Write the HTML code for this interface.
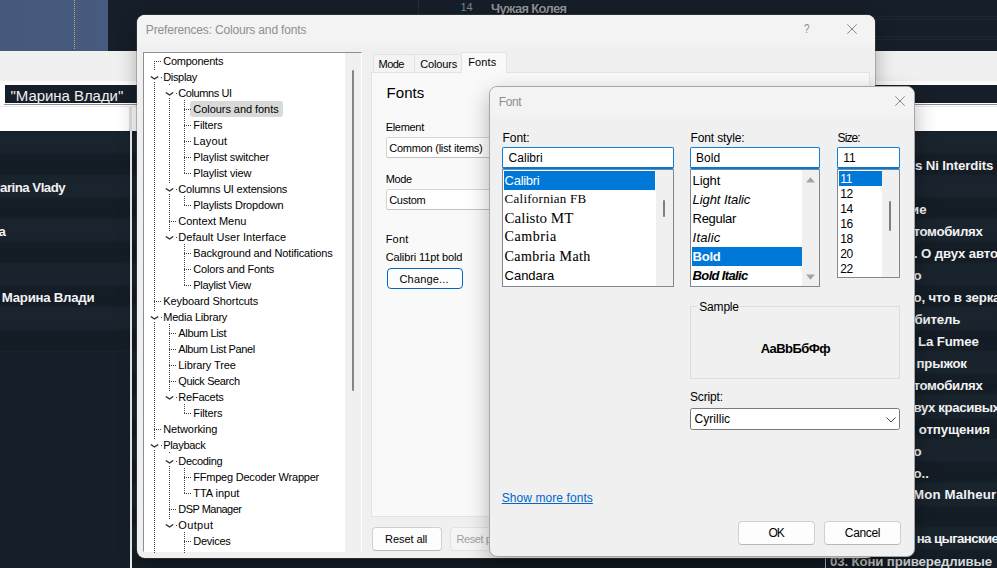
<!DOCTYPE html>
<html><head><meta charset="utf-8"><title>Preferences</title>
<style>
html,body{margin:0;padding:0;}
body{width:997px;height:568px;overflow:hidden;background:#161f29;position:relative;font-family:"Liberation Sans",sans-serif;}
.b{position:absolute;box-sizing:border-box;}
.t{position:absolute;white-space:pre;}
svg{position:absolute;overflow:visible;}
</style></head><body>
<div class="b" id="bg" style="left:0;top:0;width:997px;height:568px;overflow:hidden;">
<div class="b" style="left:0px;top:132px;width:130px;height:220px;background:repeating-linear-gradient(180deg,#19232c 0,#1a242e 10px,#19232c 20px,#151e27 23px,#131c24 33px,#151e27 42px,#19232c 44px);"></div>
<div class="b" style="left:132px;top:132px;width:865px;height:436px;background:repeating-linear-gradient(180deg,#19232c 0,#1a242e 10px,#19232c 20px,#151e27 23px,#131c24 33px,#151e27 42px,#19232c 44px);"></div>
<div class="b" style="left:0px;top:0px;width:108px;height:50.6px;background:linear-gradient(90deg,#45597c,#475b7e);"></div>
<div class="b" style="left:74px;top:0px;width:1px;height:50px;background:repeating-linear-gradient(180deg,#c2a977 0,#c2a977 1px,transparent 1px,transparent 2px);"></div>
<span class="t" style='left:460.50px;top:0.19px;font-size:11px;line-height:14px;color:#7d858d;font-family:"Liberation Sans", sans-serif;'>14</span>
<span class="t" style='left:491.00px;top:-0.40px;font-size:13px;line-height:17px;color:#909396;font-family:"Liberation Sans", sans-serif;letter-spacing:-0.663px;font-weight:bold;text-shadow:1px 1px 0 #080c10;'>Чужая Колея</span>
<div class="b" style="left:418px;top:0px;width:1px;height:50px;background:#222d38;"></div>
<div class="b" style="left:600px;top:16px;width:397px;height:1px;background:#1b2833;"></div>
<div class="b" style="left:600px;top:19px;width:397px;height:1px;background:#1b2833;"></div>
<div class="b" style="left:600px;top:36px;width:397px;height:1px;background:#1b2833;"></div>
<div class="b" style="left:600px;top:39px;width:397px;height:1px;background:#1b2833;"></div>
<div class="b" style="left:0px;top:50.6px;width:997px;height:33.4px;background:#f0f0f0;"></div>
<div class="b" style="left:0px;top:81px;width:997px;height:3px;background:#fbfbfb;"></div>
<div class="b" style="left:0px;top:84px;width:997px;height:22px;background:#fff;"></div>
<div class="b" style="left:4px;top:84px;width:997px;height:20px;background:#161f29;border:1px solid #fff;"></div>
<div class="b" style="left:4px;top:104px;width:997px;height:1px;background:#8e8e8e;"></div>
<span class="t" style='left:10.50px;top:85.80px;font-size:15px;line-height:20px;color:#f0f0f0;font-family:"Liberation Sans", sans-serif;letter-spacing:-0.050px;'>&quot;Марина Влади&quot;</span>
<div class="b" style="left:0px;top:106px;width:997px;height:25px;background:#fff;border-top:1px solid #ececec;"></div>
<div class="b" style="left:129.3px;top:107px;width:2.7px;height:24px;background:#e2e2e2;"></div>
<div class="b" style="left:130px;top:131px;width:2px;height:437px;background:#f2f3f4;"></div>
<div class="b" style="left:825px;top:556px;width:1px;height:12px;background:#c8cacc;"></div>
<span class="t" style='left:-10.50px;top:179.41px;font-size:13.25px;line-height:17px;color:#f2f2f2;font-family:"Liberation Sans", sans-serif;letter-spacing:-0.507px;font-weight:bold;'>Marina Vlady</span>
<span class="t" style='left:-1.50px;top:222.61px;font-size:13.25px;line-height:17px;color:#f2f2f2;font-family:"Liberation Sans", sans-serif;font-weight:bold;'>a</span>
<span class="t" style='left:1.80px;top:288.51px;font-size:13.25px;line-height:17px;color:#f2f2f2;font-family:"Liberation Sans", sans-serif;letter-spacing:-0.264px;font-weight:bold;'>Марина Влади</span>
<span class="t" style='left:915.00px;top:157.11px;font-size:13.25px;line-height:17px;color:#f2f2f2;font-family:"Liberation Sans", sans-serif;letter-spacing:-0.138px;font-weight:bold;'>s Ni Interdits</span>
<span class="t" style='left:903.00px;top:200.71px;font-size:13.25px;line-height:17px;color:#f2f2f2;font-family:"Liberation Sans", sans-serif;font-weight:bold;'>ние</span>
<span class="t" style='left:913.50px;top:222.61px;font-size:13.25px;line-height:17px;color:#f2f2f2;font-family:"Liberation Sans", sans-serif;letter-spacing:-0.305px;font-weight:bold;'>томобилях</span>
<span class="t" style='left:914.00px;top:244.61px;font-size:13.25px;line-height:17px;color:#f2f2f2;font-family:"Liberation Sans", sans-serif;font-weight:bold;letter-spacing:-0.15px;'>. О двух автомобилях</span>
<span class="t" style='left:913.50px;top:266.71px;font-size:13.25px;line-height:17px;color:#f2f2f2;font-family:"Liberation Sans", sans-serif;font-weight:bold;'>о</span>
<span class="t" style='left:913.50px;top:288.71px;font-size:13.25px;line-height:17px;color:#f2f2f2;font-family:"Liberation Sans", sans-serif;font-weight:bold;letter-spacing:-0.15px;'>о, что в зеркалах</span>
<span class="t" style='left:914.50px;top:310.71px;font-size:13.25px;line-height:17px;color:#f2f2f2;font-family:"Liberation Sans", sans-serif;font-weight:bold;letter-spacing:-0.15px;'>битель</span>
<span class="t" style='left:918.00px;top:332.71px;font-size:13.25px;line-height:17px;color:#f2f2f2;font-family:"Liberation Sans", sans-serif;font-weight:bold;letter-spacing:-0.15px;'>La Fumee</span>
<span class="t" style='left:916.50px;top:354.71px;font-size:13.25px;line-height:17px;color:#f2f2f2;font-family:"Liberation Sans", sans-serif;font-weight:bold;letter-spacing:-0.15px;'>прыжок</span>
<span class="t" style='left:913.50px;top:376.71px;font-size:13.25px;line-height:17px;color:#f2f2f2;font-family:"Liberation Sans", sans-serif;letter-spacing:-0.305px;font-weight:bold;'>томобилях</span>
<span class="t" style='left:913.50px;top:398.71px;font-size:13.25px;line-height:17px;color:#f2f2f2;font-family:"Liberation Sans", sans-serif;font-weight:bold;letter-spacing:-0.4px;'>вух красивых</span>
<span class="t" style='left:918.80px;top:420.71px;font-size:13.25px;line-height:17px;color:#f2f2f2;font-family:"Liberation Sans", sans-serif;letter-spacing:-0.111px;font-weight:bold;'>отпущения</span>
<span class="t" style='left:913.50px;top:442.71px;font-size:13.25px;line-height:17px;color:#f2f2f2;font-family:"Liberation Sans", sans-serif;font-weight:bold;'>о</span>
<span class="t" style='left:913.50px;top:464.71px;font-size:13.25px;line-height:17px;color:#f2f2f2;font-family:"Liberation Sans", sans-serif;font-weight:bold;'>о..</span>
<span class="t" style='left:913.00px;top:486.31px;font-size:13.25px;line-height:17px;color:#f2f2f2;font-family:"Liberation Sans", sans-serif;letter-spacing:0.146px;font-weight:bold;'>Mon Malheur</span>
<span class="t" style='left:916.70px;top:530.41px;font-size:13.25px;line-height:17px;color:#f2f2f2;font-family:"Liberation Sans", sans-serif;letter-spacing:-0.614px;font-weight:bold;'>на цыганские</span>
<span class="t" style='left:830.00px;top:552.91px;font-size:13.25px;line-height:17px;color:#d6d8da;font-family:"Liberation Sans", sans-serif;letter-spacing:-0.138px;font-weight:bold;'>03. Кони привередливые</span>
</div>
<div class="b" id="prefs" style="left:137px;top:15px;width:738px;height:543px;background:#f0f0f0;border-radius:8px;box-shadow:0 0 0 1px rgba(90,90,90,.35),0 6px 20px rgba(0,0,0,.30);overflow:hidden;">
<div class="b" style="left:0px;top:0px;width:738px;height:30px;background:#f3f3f3;"></div>
</div>
<span class="t" style='left:145.80px;top:21.74px;font-size:12px;line-height:16px;color:#8f8f8f;font-family:"Liberation Sans", sans-serif;letter-spacing:-0.166px;'>Preferences: Colours and fonts</span>
<span class="t" style='left:804.20px;top:21.04px;font-size:12px;line-height:16px;color:#8a8a8a;font-family:"Liberation Sans", sans-serif;transform:scaleX(.82);transform-origin:0 0;'>?</span>
<svg style="left:847px;top:24px" width="10" height="10" viewBox="0 0 10 10"><path d="M0.3 0.3L9.7 9.7M9.7 0.3L0.3 9.7" stroke="#8a8a8a" stroke-width="1" fill="none"/></svg>
<div class="b" style="left:143px;top:52px;width:219px;height:500.4px;background:#fff;border:1px solid #8e8e8e;border-right-color:#fff;border-bottom-color:#fff;"></div>
<div class="b" style="left:345px;top:53px;width:16px;height:499px;background:#f0f0f0;"></div>
<div class="b" style="left:351.7px;top:70px;width:2px;height:321px;background:#868686;border-radius:1px;"></div>
<div class="b" style="left:190px;top:101px;width:93px;height:16px;background:#d9d9d9;border-radius:3px;"></div>
<span class="t" style='left:163.20px;top:53.69px;font-size:11px;line-height:14px;color:#000;font-family:"Liberation Sans", sans-serif;letter-spacing:-0.235px;'>Components</span>
<div class="b" style="left:154px;top:61px;width:7.199999999999989px;height:1px;background:repeating-linear-gradient(90deg,#444 0,#444 1px,transparent 1px,transparent 2px);"></div>
<span class="t" style='left:163.20px;top:69.69px;font-size:11px;line-height:14px;color:#000;font-family:"Liberation Sans", sans-serif;letter-spacing:-0.319px;'>Display</span>
<svg style="left:149.5px;top:74.5px" width="9" height="6" viewBox="0 0 9 6"><path d="M0.8 1.5L4.5 4.0L8.2 1.5" stroke="#2b2b2b" stroke-width="1.45" fill="none"/></svg>
<div class="b" style="left:161px;top:77px;width:1px;height:1px;background:#444;"></div>
<span class="t" style='left:178.30px;top:85.69px;font-size:11px;line-height:14px;color:#000;font-family:"Liberation Sans", sans-serif;letter-spacing:-0.412px;'>Columns UI</span>
<svg style="left:164.5px;top:90.5px" width="9" height="6" viewBox="0 0 9 6"><path d="M0.8 1.5L4.5 4.0L8.2 1.5" stroke="#2b2b2b" stroke-width="1.45" fill="none"/></svg>
<div class="b" style="left:176px;top:93px;width:1px;height:1px;background:#444;"></div>
<span class="t" style='left:193.30px;top:101.69px;font-size:11px;line-height:14px;color:#000;font-family:"Liberation Sans", sans-serif;letter-spacing:-0.054px;'>Colours and fonts</span>
<div class="b" style="left:184px;top:109px;width:7.300000000000011px;height:1px;background:repeating-linear-gradient(90deg,#444 0,#444 1px,transparent 1px,transparent 2px);"></div>
<span class="t" style='left:193.30px;top:117.69px;font-size:11px;line-height:14px;color:#000;font-family:"Liberation Sans", sans-serif;letter-spacing:-0.132px;'>Filters</span>
<div class="b" style="left:184px;top:125px;width:7.300000000000011px;height:1px;background:repeating-linear-gradient(90deg,#444 0,#444 1px,transparent 1px,transparent 2px);"></div>
<span class="t" style='left:193.30px;top:133.69px;font-size:11px;line-height:14px;color:#000;font-family:"Liberation Sans", sans-serif;letter-spacing:0.125px;'>Layout</span>
<div class="b" style="left:184px;top:141px;width:7.300000000000011px;height:1px;background:repeating-linear-gradient(90deg,#444 0,#444 1px,transparent 1px,transparent 2px);"></div>
<span class="t" style='left:193.30px;top:149.69px;font-size:11px;line-height:14px;color:#000;font-family:"Liberation Sans", sans-serif;letter-spacing:-0.149px;'>Playlist switcher</span>
<div class="b" style="left:184px;top:157px;width:7.300000000000011px;height:1px;background:repeating-linear-gradient(90deg,#444 0,#444 1px,transparent 1px,transparent 2px);"></div>
<span class="t" style='left:193.30px;top:165.69px;font-size:11px;line-height:14px;color:#000;font-family:"Liberation Sans", sans-serif;letter-spacing:-0.146px;'>Playlist view</span>
<div class="b" style="left:184px;top:173px;width:7.300000000000011px;height:1px;background:repeating-linear-gradient(90deg,#444 0,#444 1px,transparent 1px,transparent 2px);"></div>
<span class="t" style='left:178.30px;top:181.69px;font-size:11px;line-height:14px;color:#000;font-family:"Liberation Sans", sans-serif;letter-spacing:-0.203px;'>Columns UI extensions</span>
<svg style="left:164.5px;top:186.5px" width="9" height="6" viewBox="0 0 9 6"><path d="M0.8 1.5L4.5 4.0L8.2 1.5" stroke="#2b2b2b" stroke-width="1.45" fill="none"/></svg>
<div class="b" style="left:176px;top:189px;width:1px;height:1px;background:#444;"></div>
<span class="t" style='left:193.30px;top:197.69px;font-size:11px;line-height:14px;color:#000;font-family:"Liberation Sans", sans-serif;letter-spacing:-0.182px;'>Playlists Dropdown</span>
<div class="b" style="left:184px;top:205px;width:7.300000000000011px;height:1px;background:repeating-linear-gradient(90deg,#444 0,#444 1px,transparent 1px,transparent 2px);"></div>
<span class="t" style='left:178.30px;top:213.69px;font-size:11px;line-height:14px;color:#000;font-family:"Liberation Sans", sans-serif;letter-spacing:-0.039px;'>Context Menu</span>
<div class="b" style="left:169px;top:221px;width:7.300000000000011px;height:1px;background:repeating-linear-gradient(90deg,#444 0,#444 1px,transparent 1px,transparent 2px);"></div>
<span class="t" style='left:178.30px;top:229.69px;font-size:11px;line-height:14px;color:#000;font-family:"Liberation Sans", sans-serif;letter-spacing:0.041px;'>Default User Interface</span>
<svg style="left:164.5px;top:234.5px" width="9" height="6" viewBox="0 0 9 6"><path d="M0.8 1.5L4.5 4.0L8.2 1.5" stroke="#2b2b2b" stroke-width="1.45" fill="none"/></svg>
<div class="b" style="left:176px;top:237px;width:1px;height:1px;background:#444;"></div>
<span class="t" style='left:193.30px;top:245.69px;font-size:11px;line-height:14px;color:#000;font-family:"Liberation Sans", sans-serif;letter-spacing:-0.135px;'>Background and Notifications</span>
<div class="b" style="left:184px;top:253px;width:7.300000000000011px;height:1px;background:repeating-linear-gradient(90deg,#444 0,#444 1px,transparent 1px,transparent 2px);"></div>
<span class="t" style='left:193.30px;top:261.69px;font-size:11px;line-height:14px;color:#000;font-family:"Liberation Sans", sans-serif;letter-spacing:-0.181px;'>Colors and Fonts</span>
<div class="b" style="left:184px;top:269px;width:7.300000000000011px;height:1px;background:repeating-linear-gradient(90deg,#444 0,#444 1px,transparent 1px,transparent 2px);"></div>
<span class="t" style='left:193.30px;top:277.69px;font-size:11px;line-height:14px;color:#000;font-family:"Liberation Sans", sans-serif;letter-spacing:-0.299px;'>Playlist View</span>
<div class="b" style="left:184px;top:285px;width:7.300000000000011px;height:1px;background:repeating-linear-gradient(90deg,#444 0,#444 1px,transparent 1px,transparent 2px);"></div>
<span class="t" style='left:163.20px;top:293.69px;font-size:11px;line-height:14px;color:#000;font-family:"Liberation Sans", sans-serif;letter-spacing:-0.086px;'>Keyboard Shortcuts</span>
<div class="b" style="left:154px;top:301px;width:7.199999999999989px;height:1px;background:repeating-linear-gradient(90deg,#444 0,#444 1px,transparent 1px,transparent 2px);"></div>
<span class="t" style='left:163.20px;top:309.69px;font-size:11px;line-height:14px;color:#000;font-family:"Liberation Sans", sans-serif;letter-spacing:-0.207px;'>Media Library</span>
<svg style="left:149.5px;top:314.5px" width="9" height="6" viewBox="0 0 9 6"><path d="M0.8 1.5L4.5 4.0L8.2 1.5" stroke="#2b2b2b" stroke-width="1.45" fill="none"/></svg>
<div class="b" style="left:161px;top:317px;width:1px;height:1px;background:#444;"></div>
<span class="t" style='left:178.30px;top:325.69px;font-size:11px;line-height:14px;color:#000;font-family:"Liberation Sans", sans-serif;letter-spacing:-0.345px;'>Album List</span>
<div class="b" style="left:169px;top:333px;width:7.300000000000011px;height:1px;background:repeating-linear-gradient(90deg,#444 0,#444 1px,transparent 1px,transparent 2px);"></div>
<span class="t" style='left:178.30px;top:341.69px;font-size:11px;line-height:14px;color:#000;font-family:"Liberation Sans", sans-serif;letter-spacing:-0.373px;'>Album List Panel</span>
<div class="b" style="left:169px;top:349px;width:7.300000000000011px;height:1px;background:repeating-linear-gradient(90deg,#444 0,#444 1px,transparent 1px,transparent 2px);"></div>
<span class="t" style='left:178.30px;top:357.69px;font-size:11px;line-height:14px;color:#000;font-family:"Liberation Sans", sans-serif;letter-spacing:-0.104px;'>Library Tree</span>
<div class="b" style="left:169px;top:365px;width:7.300000000000011px;height:1px;background:repeating-linear-gradient(90deg,#444 0,#444 1px,transparent 1px,transparent 2px);"></div>
<span class="t" style='left:178.30px;top:373.69px;font-size:11px;line-height:14px;color:#000;font-family:"Liberation Sans", sans-serif;letter-spacing:-0.389px;'>Quick Search</span>
<div class="b" style="left:169px;top:381px;width:7.300000000000011px;height:1px;background:repeating-linear-gradient(90deg,#444 0,#444 1px,transparent 1px,transparent 2px);"></div>
<span class="t" style='left:178.30px;top:389.69px;font-size:11px;line-height:14px;color:#000;font-family:"Liberation Sans", sans-serif;letter-spacing:-0.217px;'>ReFacets</span>
<svg style="left:164.5px;top:394.5px" width="9" height="6" viewBox="0 0 9 6"><path d="M0.8 1.5L4.5 4.0L8.2 1.5" stroke="#2b2b2b" stroke-width="1.45" fill="none"/></svg>
<div class="b" style="left:176px;top:397px;width:1px;height:1px;background:#444;"></div>
<span class="t" style='left:193.30px;top:405.69px;font-size:11px;line-height:14px;color:#000;font-family:"Liberation Sans", sans-serif;letter-spacing:-0.132px;'>Filters</span>
<div class="b" style="left:184px;top:413px;width:7.300000000000011px;height:1px;background:repeating-linear-gradient(90deg,#444 0,#444 1px,transparent 1px,transparent 2px);"></div>
<span class="t" style='left:163.20px;top:421.69px;font-size:11px;line-height:14px;color:#000;font-family:"Liberation Sans", sans-serif;letter-spacing:-0.097px;'>Networking</span>
<div class="b" style="left:154px;top:429px;width:7.199999999999989px;height:1px;background:repeating-linear-gradient(90deg,#444 0,#444 1px,transparent 1px,transparent 2px);"></div>
<span class="t" style='left:163.20px;top:437.69px;font-size:11px;line-height:14px;color:#000;font-family:"Liberation Sans", sans-serif;letter-spacing:-0.298px;'>Playback</span>
<svg style="left:149.5px;top:442.5px" width="9" height="6" viewBox="0 0 9 6"><path d="M0.8 1.5L4.5 4.0L8.2 1.5" stroke="#2b2b2b" stroke-width="1.45" fill="none"/></svg>
<div class="b" style="left:161px;top:445px;width:1px;height:1px;background:#444;"></div>
<span class="t" style='left:178.30px;top:453.69px;font-size:11px;line-height:14px;color:#000;font-family:"Liberation Sans", sans-serif;letter-spacing:-0.304px;'>Decoding</span>
<svg style="left:164.5px;top:458.5px" width="9" height="6" viewBox="0 0 9 6"><path d="M0.8 1.5L4.5 4.0L8.2 1.5" stroke="#2b2b2b" stroke-width="1.45" fill="none"/></svg>
<div class="b" style="left:176px;top:461px;width:1px;height:1px;background:#444;"></div>
<span class="t" style='left:193.30px;top:469.69px;font-size:11px;line-height:14px;color:#000;font-family:"Liberation Sans", sans-serif;letter-spacing:-0.223px;'>FFmpeg Decoder Wrapper</span>
<div class="b" style="left:184px;top:477px;width:7.300000000000011px;height:1px;background:repeating-linear-gradient(90deg,#444 0,#444 1px,transparent 1px,transparent 2px);"></div>
<span class="t" style='left:193.30px;top:485.69px;font-size:11px;line-height:14px;color:#000;font-family:"Liberation Sans", sans-serif;letter-spacing:-0.027px;'>TTA input</span>
<div class="b" style="left:184px;top:493px;width:7.300000000000011px;height:1px;background:repeating-linear-gradient(90deg,#444 0,#444 1px,transparent 1px,transparent 2px);"></div>
<span class="t" style='left:178.30px;top:501.69px;font-size:11px;line-height:14px;color:#000;font-family:"Liberation Sans", sans-serif;letter-spacing:-0.524px;'>DSP Manager</span>
<div class="b" style="left:169px;top:509px;width:7.300000000000011px;height:1px;background:repeating-linear-gradient(90deg,#444 0,#444 1px,transparent 1px,transparent 2px);"></div>
<span class="t" style='left:178.30px;top:517.69px;font-size:11px;line-height:14px;color:#000;font-family:"Liberation Sans", sans-serif;letter-spacing:0.366px;'>Output</span>
<svg style="left:164.5px;top:522.5px" width="9" height="6" viewBox="0 0 9 6"><path d="M0.8 1.5L4.5 4.0L8.2 1.5" stroke="#2b2b2b" stroke-width="1.45" fill="none"/></svg>
<div class="b" style="left:176px;top:525px;width:1px;height:1px;background:#444;"></div>
<span class="t" style='left:193.30px;top:533.69px;font-size:11px;line-height:14px;color:#000;font-family:"Liberation Sans", sans-serif;letter-spacing:-0.262px;'>Devices</span>
<div class="b" style="left:184px;top:541px;width:7.300000000000011px;height:1px;background:repeating-linear-gradient(90deg,#444 0,#444 1px,transparent 1px,transparent 2px);"></div>
<div class="b" style="left:154px;top:61px;width:1px;height:10px;background:repeating-linear-gradient(180deg,#444 0,#444 1px,transparent 1px,transparent 2px);"></div>
<div class="b" style="left:154px;top:82px;width:1px;height:229px;background:repeating-linear-gradient(180deg,#444 0,#444 1px,transparent 1px,transparent 2px);"></div>
<div class="b" style="left:154px;top:322px;width:1px;height:117px;background:repeating-linear-gradient(180deg,#444 0,#444 1px,transparent 1px,transparent 2px);"></div>
<div class="b" style="left:154px;top:450px;width:1px;height:103px;background:repeating-linear-gradient(180deg,#444 0,#444 1px,transparent 1px,transparent 2px);"></div>
<div class="b" style="left:169px;top:84px;width:1px;height:2px;background:repeating-linear-gradient(180deg,#444 0,#444 1px,transparent 1px,transparent 2px);"></div>
<div class="b" style="left:169px;top:98px;width:1px;height:85px;background:repeating-linear-gradient(180deg,#444 0,#444 1px,transparent 1px,transparent 2px);"></div>
<div class="b" style="left:169px;top:194px;width:1px;height:37px;background:repeating-linear-gradient(180deg,#444 0,#444 1px,transparent 1px,transparent 2px);"></div>
<div class="b" style="left:184px;top:100px;width:1px;height:74px;background:repeating-linear-gradient(180deg,#444 0,#444 1px,transparent 1px,transparent 2px);"></div>
<div class="b" style="left:184px;top:196px;width:1px;height:10px;background:repeating-linear-gradient(180deg,#444 0,#444 1px,transparent 1px,transparent 2px);"></div>
<div class="b" style="left:184px;top:244px;width:1px;height:42px;background:repeating-linear-gradient(180deg,#444 0,#444 1px,transparent 1px,transparent 2px);"></div>
<div class="b" style="left:169px;top:324px;width:1px;height:67px;background:repeating-linear-gradient(180deg,#444 0,#444 1px,transparent 1px,transparent 2px);"></div>
<div class="b" style="left:184px;top:404px;width:1px;height:10px;background:repeating-linear-gradient(180deg,#444 0,#444 1px,transparent 1px,transparent 2px);"></div>
<div class="b" style="left:169px;top:452px;width:1px;height:2px;background:repeating-linear-gradient(180deg,#444 0,#444 1px,transparent 1px,transparent 2px);"></div>
<div class="b" style="left:169px;top:466px;width:1px;height:53px;background:repeating-linear-gradient(180deg,#444 0,#444 1px,transparent 1px,transparent 2px);"></div>
<div class="b" style="left:184px;top:468px;width:1px;height:26px;background:repeating-linear-gradient(180deg,#444 0,#444 1px,transparent 1px,transparent 2px);"></div>
<div class="b" style="left:184px;top:532px;width:1px;height:21px;background:repeating-linear-gradient(180deg,#444 0,#444 1px,transparent 1px,transparent 2px);"></div>
<div class="b" style="left:373px;top:53.5px;width:42px;height:19px;background:#f3f3f3;border:1px solid #e3e3e3;border-bottom:none;"></div>
<div class="b" style="left:414px;top:53.5px;width:48px;height:19px;background:#f3f3f3;border:1px solid #e3e3e3;border-bottom:none;"></div>
<div class="b" style="left:371px;top:71.5px;width:498.7px;height:445px;background:#f9f9f9;border:1px solid #e3e3e3;"></div>
<div class="b" style="left:460.5px;top:51.5px;width:46px;height:21px;background:#f9f9f9;border:1px solid #e3e3e3;border-bottom:none;"></div>
<span class="t" style='left:378.50px;top:56.79px;font-size:11px;line-height:14px;color:#000;font-family:"Liberation Sans", sans-serif;letter-spacing:-0.522px;'>Mode</span>
<span class="t" style='left:420.20px;top:56.79px;font-size:11px;line-height:14px;color:#000;font-family:"Liberation Sans", sans-serif;letter-spacing:-0.142px;'>Colours</span>
<span class="t" style='left:468.20px;top:54.59px;font-size:11px;line-height:14px;color:#000;font-family:"Liberation Sans", sans-serif;letter-spacing:0.135px;'>Fonts</span>
<span class="t" style='left:386.60px;top:83.00px;font-size:15px;line-height:20px;color:#000;font-family:"Liberation Sans", sans-serif;letter-spacing:0.059px;'>Fonts</span>
<span class="t" style='left:385.70px;top:119.89px;font-size:11px;line-height:14px;color:#000;font-family:"Liberation Sans", sans-serif;letter-spacing:-0.301px;'>Element</span>
<div class="b" style="left:385.8px;top:137px;width:111px;height:20.6px;background:#fff;border:1px solid #d4d4d4;border-bottom-color:#c2c2c2;border-radius:2.5px;"></div>
<span class="t" style='left:389.20px;top:141.19px;font-size:11px;line-height:14px;color:#000;font-family:"Liberation Sans", sans-serif;letter-spacing:-0.235px;'>Common (list items)</span>
<span class="t" style='left:385.70px;top:171.79px;font-size:11px;line-height:14px;color:#000;font-family:"Liberation Sans", sans-serif;letter-spacing:-0.322px;'>Mode</span>
<div class="b" style="left:385.8px;top:189px;width:111px;height:20.6px;background:#fff;border:1px solid #d4d4d4;border-bottom-color:#c2c2c2;border-radius:2.5px;"></div>
<span class="t" style='left:389.20px;top:193.19px;font-size:11px;line-height:14px;color:#000;font-family:"Liberation Sans", sans-serif;letter-spacing:-0.270px;'>Custom</span>
<span class="t" style='left:385.70px;top:232.19px;font-size:11px;line-height:14px;color:#000;font-family:"Liberation Sans", sans-serif;letter-spacing:0.180px;'>Font</span>
<span class="t" style='left:385.70px;top:250.49px;font-size:11px;line-height:14px;color:#000;font-family:"Liberation Sans", sans-serif;letter-spacing:-0.120px;'>Calibri 11pt bold</span>
<div class="b" style="left:387px;top:268px;width:76px;height:21px;background:#fdfdfd;border:1px solid #0067c0;border-radius:4px;"></div>
<span class="t" style='left:399.50px;top:272.29px;font-size:11px;line-height:14px;color:#000;font-family:"Liberation Sans", sans-serif;letter-spacing:0.169px;'>Change...</span>
<div class="b" style="left:372px;top:527px;width:69.7px;height:23.5px;background:#fdfdfd;border:1px solid #d0d0d0;border-bottom-color:#b9b9b9;border-radius:4px;"></div>
<span class="t" style='left:385.10px;top:532.19px;font-size:11px;line-height:14px;color:#000;font-family:"Liberation Sans", sans-serif;letter-spacing:-0.081px;'>Reset all</span>
<div class="b" style="left:450.3px;top:527px;width:80px;height:23.5px;background:#f5f5f5;border:1px solid #e3e3e3;border-radius:4px;"></div>
<span class="t" style='left:456.40px;top:532.19px;font-size:11px;line-height:14px;color:#a0a0a0;font-family:"Liberation Sans", sans-serif;letter-spacing:-0.412px;'>Reset page</span>
<div class="b" id="fontdlg" style="left:489px;top:86px;width:426px;height:470.6px;background:#f0f0f0;border-radius:8px;border:1px solid #a6a6a6;box-shadow:0 8px 22px rgba(0,0,0,.28);overflow:hidden;">
<div class="b" style="left:0px;top:0px;width:426px;height:30px;background:#f3f3f3;"></div>
</div>
<span class="t" style='left:498.70px;top:93.84px;font-size:12px;line-height:16px;color:#8e8e8e;font-family:"Liberation Sans", sans-serif;letter-spacing:-0.371px;'>Font</span>
<svg style="left:895px;top:96px" width="10" height="10" viewBox="0 0 10 10"><path d="M0.3 0.3L9.7 9.7M9.7 0.3L0.3 9.7" stroke="#8a8a8a" stroke-width="1" fill="none"/></svg>
<span class="t" style='left:502.50px;top:130.04px;font-size:12px;line-height:16px;color:#000;font-family:"Liberation Sans", sans-serif;letter-spacing:-0.061px;'>Font:</span>
<span class="t" style='left:690.50px;top:130.04px;font-size:12px;line-height:16px;color:#000;font-family:"Liberation Sans", sans-serif;letter-spacing:-0.125px;'>Font style:</span>
<span class="t" style='left:837.60px;top:130.04px;font-size:12px;line-height:16px;color:#000;font-family:"Liberation Sans", sans-serif;letter-spacing:-0.894px;'>Size:</span>
<div class="b" style="left:502px;top:147px;width:172px;height:21.5px;background:#fff;border:1px solid #0f7fd8;border-bottom:2px solid #0078d4;border-radius:2px;"></div>
<div class="b" style="left:690px;top:147px;width:130px;height:21.5px;background:#fff;border:1px solid #0f7fd8;border-bottom:2px solid #0078d4;border-radius:2px;"></div>
<div class="b" style="left:837px;top:147px;width:63px;height:21.5px;background:#fff;border:1px solid #0f7fd8;border-bottom:2px solid #0078d4;border-radius:2px;"></div>
<span class="t" style='left:508.60px;top:149.84px;font-size:12px;line-height:16px;color:#000;font-family:"Liberation Sans", sans-serif;letter-spacing:0.015px;'>Calibri</span>
<span class="t" style='left:696.00px;top:149.84px;font-size:12px;line-height:16px;color:#000;font-family:"Liberation Sans", sans-serif;letter-spacing:0.027px;'>Bold</span>
<span class="t" style='left:843.20px;top:149.84px;font-size:12px;line-height:16px;color:#000;font-family:"Liberation Sans", sans-serif;'>11</span>
<div class="b" style="left:502px;top:169px;width:172px;height:118px;background:#fff;border:1px solid #828790;"></div>
<div class="b" style="left:656px;top:170px;width:17px;height:116px;background:#f0f0f0;"></div>
<div class="b" style="left:662.7px;top:200px;width:2.5px;height:17px;background:#7f7f7f;border-radius:1px;"></div>
<div class="b" style="left:504px;top:171px;width:151px;height:19px;background:#0078d7;"></div>
<span class="t" style='left:504.60px;top:171.70px;font-size:13px;line-height:17px;color:#fff;font-family:"Liberation Sans", sans-serif;letter-spacing:-0.282px;'>Calibri</span>
<span class="t" style='left:504.60px;top:190.31px;font-size:13px;line-height:17px;color:#000;font-family:"Liberation Serif", serif;letter-spacing:0.253px;'>Californian FB</span>
<span class="t" style='left:504.60px;top:207.94px;font-size:15px;line-height:20px;color:#000;font-family:"Liberation Serif", serif;letter-spacing:-0.000px;'>Calisto MT</span>
<span class="t" style='left:504.60px;top:228.18px;font-size:14px;line-height:18px;color:#000;font-family:"Liberation Serif", serif;letter-spacing:0.582px;-webkit-text-stroke:.1px #000;'>Cambria</span>
<span class="t" style='left:504.60px;top:247.88px;font-size:14px;line-height:18px;color:#000;font-family:"Liberation Serif", serif;letter-spacing:0.404px;-webkit-text-stroke:.1px #000;'>Cambria Math</span>
<span class="t" style='left:504.60px;top:266.90px;font-size:13px;line-height:17px;color:#000;font-family:"Liberation Sans", sans-serif;letter-spacing:-0.036px;'>Candara</span>
<div class="b" style="left:690px;top:169px;width:130px;height:117.5px;background:#fff;border:1px solid #828790;"></div>
<div class="b" style="left:802px;top:170px;width:17px;height:115.5px;background:#f0f0f0;"></div>
<svg style="left:805.5px;top:177px" width="9" height="6" viewBox="0 0 9 6"><path d="M0 5.5L4.5 0.3L9 5.5Z" fill="#a3a3a3"/></svg>
<svg style="left:805.5px;top:273.5px" width="9" height="6" viewBox="0 0 9 6"><path d="M0 0.5L4.5 5.7L9 0.5Z" fill="#a3a3a3"/></svg>
<div class="b" style="left:692px;top:247px;width:110px;height:19px;background:#0078d7;"></div>
<span class="t" style='left:692.60px;top:171.70px;font-size:13px;line-height:17px;color:#000;font-family:"Liberation Sans", sans-serif;letter-spacing:-0.135px;'>Light</span>
<span class="t" style='left:692.60px;top:191.00px;font-size:13px;line-height:17px;color:#000;font-family:"Liberation Sans", sans-serif;letter-spacing:-0.080px;font-style:italic;'>Light Italic</span>
<span class="t" style='left:692.60px;top:210.00px;font-size:13px;line-height:17px;color:#000;font-family:"Liberation Sans", sans-serif;letter-spacing:-0.313px;'>Regular</span>
<span class="t" style='left:692.60px;top:229.00px;font-size:13px;line-height:17px;color:#000;font-family:"Liberation Sans", sans-serif;letter-spacing:0.184px;font-style:italic;'>Italic</span>
<span class="t" style='left:692.60px;top:247.50px;font-size:13px;line-height:17px;color:#fff;font-family:"Liberation Sans", sans-serif;letter-spacing:-0.244px;font-weight:bold;'>Bold</span>
<span class="t" style='left:692.60px;top:266.50px;font-size:13px;line-height:17px;color:#000;font-family:"Liberation Sans", sans-serif;letter-spacing:-0.647px;font-weight:bold;font-style:italic;'>Bold Italic</span>
<div class="b" style="left:837px;top:169px;width:63px;height:109px;background:#fff;border:1px solid #828790;"></div>
<div class="b" style="left:882px;top:170px;width:17px;height:107px;background:#f0f0f0;"></div>
<div class="b" style="left:888.5px;top:200.8px;width:2.5px;height:30.5px;background:#7f7f7f;border-radius:1px;"></div>
<div class="b" style="left:839px;top:170.7px;width:43px;height:15.3px;background:#0078d7;"></div>
<span class="t" style='left:840.20px;top:170.64px;font-size:12px;line-height:16px;color:#fff;font-family:"Liberation Sans", sans-serif;letter-spacing:-0.3px;'>11</span>
<span class="t" style='left:840.20px;top:185.64px;font-size:12px;line-height:16px;color:#000;font-family:"Liberation Sans", sans-serif;letter-spacing:-0.3px;'>12</span>
<span class="t" style='left:840.20px;top:200.64px;font-size:12px;line-height:16px;color:#000;font-family:"Liberation Sans", sans-serif;letter-spacing:-0.3px;'>14</span>
<span class="t" style='left:840.20px;top:215.64px;font-size:12px;line-height:16px;color:#000;font-family:"Liberation Sans", sans-serif;letter-spacing:-0.3px;'>16</span>
<span class="t" style='left:840.20px;top:230.64px;font-size:12px;line-height:16px;color:#000;font-family:"Liberation Sans", sans-serif;letter-spacing:-0.3px;'>18</span>
<span class="t" style='left:840.20px;top:245.64px;font-size:12px;line-height:16px;color:#000;font-family:"Liberation Sans", sans-serif;letter-spacing:-0.3px;'>20</span>
<span class="t" style='left:840.20px;top:260.64px;font-size:12px;line-height:16px;color:#000;font-family:"Liberation Sans", sans-serif;letter-spacing:-0.3px;'>22</span>
<div class="b" style="left:690px;top:306px;width:210px;height:73px;border:1px solid #dcdcdc;"></div>
<div class="b" style="left:696.5px;top:300px;width:43.5px;height:14px;background:#f0f0f0;"></div>
<span class="t" style='left:699.30px;top:298.84px;font-size:12px;line-height:16px;color:#000;font-family:"Liberation Sans", sans-serif;letter-spacing:-0.197px;'>Sample</span>
<span class="t" style='left:760.80px;top:340.40px;font-size:13px;line-height:17px;color:#000;font-family:"Liberation Sans", sans-serif;letter-spacing:-0.563px;font-weight:bold;'>AaBbБбФф</span>
<span class="t" style='left:690.00px;top:389.04px;font-size:12px;line-height:16px;color:#000;font-family:"Liberation Sans", sans-serif;letter-spacing:-0.151px;'>Script:</span>
<div class="b" style="left:690px;top:408px;width:210px;height:22px;background:#fff;border:1px solid #7a7a7a;border-radius:2.5px;"></div>
<span class="t" style='left:694.50px;top:410.64px;font-size:12px;line-height:16px;color:#000;font-family:"Liberation Sans", sans-serif;letter-spacing:0.039px;'>Cyrillic</span>
<svg style="left:886px;top:417px" width="10" height="6" viewBox="0 0 10 6"><path d="M0.5 0.5L5 5L9.5 0.5" stroke="#444" stroke-width="1" fill="none"/></svg>
<span class="t" style='left:501.80px;top:490.24px;font-size:12px;line-height:16px;color:#0066cc;font-family:"Liberation Sans", sans-serif;letter-spacing:0.068px;text-decoration:underline;'>Show more fonts</span>
<div class="b" style="left:738px;top:521.3px;width:76.5px;height:23.4px;background:#fdfdfd;border:1px solid #d0d0d0;border-bottom-color:#b9b9b9;border-radius:4px;"></div>
<div class="b" style="left:824.2px;top:521.3px;width:76.5px;height:23.4px;background:#fdfdfd;border:1px solid #d0d0d0;border-bottom-color:#b9b9b9;border-radius:4px;"></div>
<span class="t" style='left:768.50px;top:524.54px;font-size:12px;line-height:16px;color:#000;font-family:"Liberation Sans", sans-serif;letter-spacing:-1.038px;'>OK</span>
<span class="t" style='left:844.80px;top:524.54px;font-size:12px;line-height:16px;color:#000;font-family:"Liberation Sans", sans-serif;letter-spacing:-0.331px;'>Cancel</span>
</body></html>
